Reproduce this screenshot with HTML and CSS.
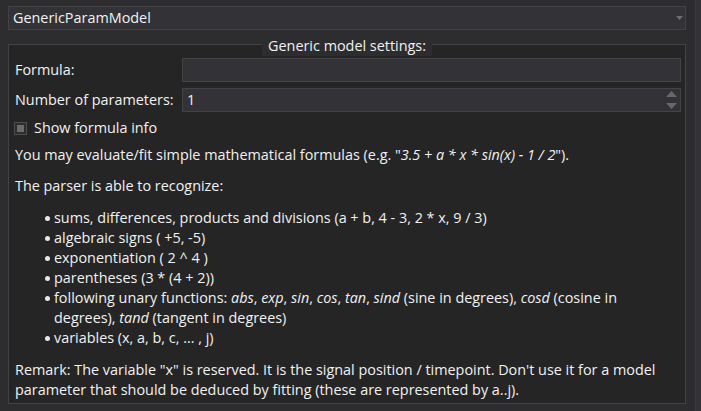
FILE: index.html
```html
<!DOCTYPE html>
<html>
<head>
<meta charset="utf-8">
<link rel="stylesheet" href="styles.css">
</head>
<body>
<div class="page">
  <div class="main">
    <div class="combo">
      <span>GenericParamModel</span>
      <svg class="combo-arrow" width="7" height="4" viewBox="0 0 7 4"><path d="M0 0H7L3.5 4Z" fill="#6e6e72"/></svg>
    </div>
    <div class="group">
      <div class="group-head"><span class="group-title">Generic model settings:</span></div>
      <div class="group-body">
        <div class="form">
          <label class="lbl">Formula:</label>
          <div class="input"></div>
          <label class="lbl">Number of parameters:</label>
          <div class="input spin">
            <span>1</span>
            <span class="spin-arrows">
              <svg width="11" height="6" viewBox="0 0 11 6"><path d="M0 6L5.5 0L11 6Z" fill="#68686c"/></svg>
              <svg width="11" height="6" viewBox="0 0 11 6"><path d="M0 0H11L5.5 6Z" fill="#68686c"/></svg>
            </span>
          </div>
        </div>
        <div class="check-row">
          <span class="checkbox"><span class="checkbox-fill"></span></span>
          <span>Show formula info</span>
        </div>
        <div class="info">
          <p class="p1">You may evaluate/fit simple mathematical formulas (e.g. "<i>3.5 + a * x * sin(x) - 1 / 2</i>").</p>
          <p class="p2">The parser is able to recognize:</p>
          <ul class="list">
            <li>sums, differences, products and divisions (a + b, 4 - 3, 2 * x, 9 / 3)</li>
            <li>algebraic signs ( +5, -5)</li>
            <li>exponentiation ( 2 ^ 4 )</li>
            <li>parentheses (3 * (4 + 2))</li>
            <li><span>following unary functions: <i>abs</i>, <i>exp</i>, <i>sin</i>, <i>cos</i>, <i>tan</i>, <i>sind</i> (sine in degrees), <i>cosd</i> (cosine in degrees), <i>tand</i> (tangent in degrees)</span></li>
            <li>variables (x, a, b, c, ... , j)</li>
          </ul>
          <p class="remark">Remark: The variable "x" is reserved. It is the signal position / timepoint. Don't use it for a model parameter that should be deduced by fitting (these are represented by a..j).</p>
        </div>
      </div>
    </div>
  </div>
  <div class="scroll-strip"></div>
</div>
</body>
</html>
```
FILE: styles.css
```css
html, body {
  margin: 0;
  padding: 0;
}
body {
  background: #2d2d30;
  color: #f1f1f1;
  font-family: "Open Sans", "Noto Sans", sans-serif;
  font-size: 14.4px;
  line-height: 20px;
  width: 701px;
  height: 411px;
  overflow: hidden;
}
.page {
  display: flex;
  height: 411px;
}
.main {
  flex: 1;
  padding: 6px 9px 0 8px;
}
.scroll-strip {
  width: 5px;
  border-left: 1px solid #3a3a3e;
  background: #333337;
}
.combo {
  box-sizing: border-box;
  height: 24px;
  border: 1px solid #434346;
  background: #333337;
  display: flex;
  align-items: center;
  justify-content: space-between;
  padding: 0 4px 0 4px;
}
.combo-arrow {
  margin-right: -2px;
}
.group {
  margin-top: 6px;
}
.group-head {
  display: flex;
  height: 20px;
}
.group-head::before,
.group-head::after {
  content: "";
  flex: 1;
  margin-top: 8px;
  border-top: 1px solid #434346;
  background: #252526;
}
.group-head::before {
  border-left: 1px solid #434346;
}
.group-head::after {
  border-right: 1px solid #434346;
}
.group-title {
  padding: 0 6px;
}
.group-body {
  border: 1px solid #434346;
  border-top: none;
  background: #252526;
  padding: 2px 4px 3px 6px;
}
.form {
  display: grid;
  grid-template-columns: 167px 1fr;
  row-gap: 6px;
  align-items: center;
}
.lbl {
  line-height: 20px;
}
.input {
  box-sizing: border-box;
  height: 24px;
  border: 1px solid #434346;
  background: #333337;
  display: flex;
  align-items: center;
  padding: 0 4px;
}
.spin {
  justify-content: space-between;
  padding-right: 3px;
}
.spin-arrows {
  display: flex;
  flex-direction: column;
  justify-content: space-between;
  height: 18px;
}
.spin-arrows svg {
  display: block;
}
.check-row {
  display: flex;
  align-items: center;
  margin-top: 6px;
}
.checkbox {
  box-sizing: border-box;
  width: 13px;
  height: 13px;
  border: 1px solid #4d4d50;
  background: #2d2d30;
  padding: 2px;
  margin: 0 7px 0 -1px;
  display: flex;
}
.checkbox-fill {
  flex: 1;
  background: #6b6b6e;
}
.info p {
  margin: 0;
}
.p1 {
  margin-top: 7px !important;
}
.p2 {
  margin-top: 11px !important;
}
.list {
  list-style: none;
  margin: 12px 0 0 0;
  padding: 0 0 0 30px;
}
.list li {
  display: flex;
}
.list li::before {
  content: "";
  flex: none;
  width: 5px;
  height: 5px;
  border-radius: 50%;
  background: #e8e8e8;
  margin: 8px 4px 0 0;
}
.remark {
  margin-top: 12px !important;
}
```
